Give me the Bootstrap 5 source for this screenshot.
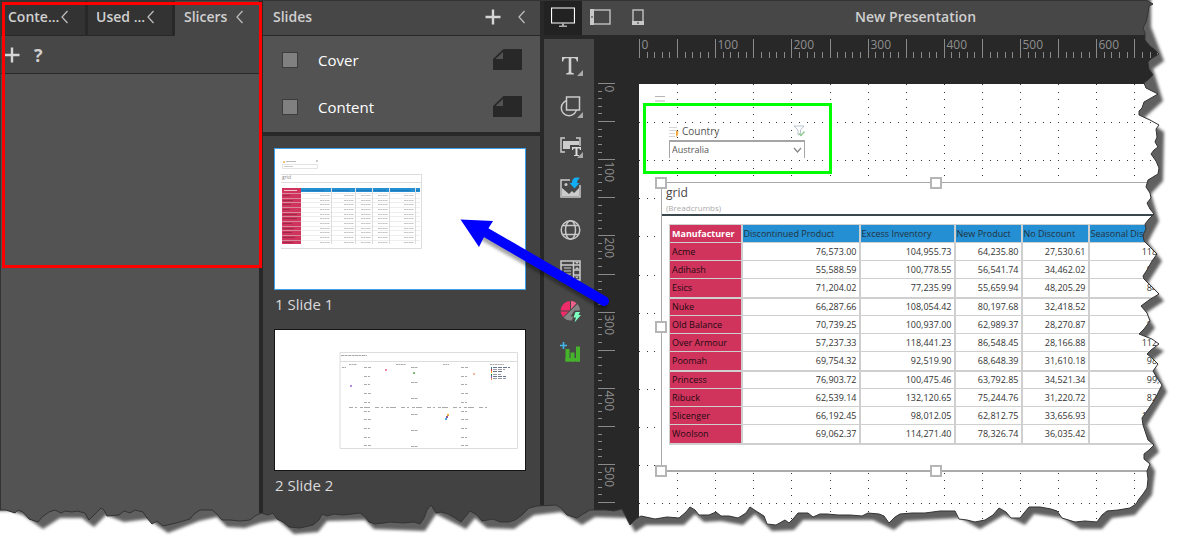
<!DOCTYPE html>
<html lang="en">
<head>
<meta charset="utf-8">
<meta name="viewport" content="width=device-width, initial-scale=1">
<title>New Presentation</title>
<link rel="stylesheet" href="https://cdn.jsdelivr.net/npm/bootstrap@5.3.0/dist/css/bootstrap.min.css">
<style>
  :root { --ink:#282828; --bar:#474747; --panel:#535353; --deep:#424242; --soft:#d0d0d0; }
  body { font-family:"Open Sans","Noto Sans",sans-serif; background:var(--ink); color:#fff; font-size:15px; line-height:20px; }
  button { color:inherit; background:none; border:0; padding:0; }
  svg { display:block; }
  .shell { min-height:100vh; border-left:1px solid #333; border-top:1px solid #333; }
  .slicer-pane { width:262px; background:var(--panel); border-right:4px solid var(--ink); }
  .tabs { height:35px; background:var(--ink); gap:3px; padding-bottom:1px; }
  .tab { width:84px; padding-left:7px; padding-bottom:3px; background:#333; color:var(--soft); font-size:14px; font-weight:600; gap:1px; white-space:nowrap; }
  .tab.on { background:var(--bar); margin-bottom:-1px; padding-left:9px; gap:8px; }
  .pane-tools { height:38px; background:var(--bar); border-bottom:1px solid var(--ink); gap:14px; padding-left:3px; color:var(--soft); }
  .ask { font-size:18px; font-weight:700; }
  .slides-pane { width:277px; background:var(--deep); }
  .bar-head { height:35px; background:var(--bar); border-bottom:1px solid var(--ink); color:var(--soft); font-size:14px; font-weight:600; padding:0 14px 3px 10px; }
  .masters { background:var(--panel); border-bottom:4px solid var(--ink); height:100px; }
  .master-row { height:47px; padding:0 18px 0 19px; gap:20px; }
  .form-check-input.sq { width:16px; height:16px; margin:0; border:1px solid #3c3c3c; border-radius:0; background-color:#808080; }
  .slide-list { padding:12px 11px 0; }
  .thumb { border:1px solid #151515; background:#fff; width:252px; display:block; }
  .thumb.on { border-color:#3ea0ea; }
  .thumb-label { height:39px; padding:4px 1px; color:#dadada; }
  .stage { border-left:4px solid var(--ink); min-width:0; }
  .stage-top { height:34px; background:var(--bar); }
  .device { width:37px; padding-bottom:2px; }
  .device.on { width:38px; background:#222; }
  .doc-title { font-size:14px; font-weight:600; color:var(--soft); padding-bottom:3px; }
  .work { min-width:0; }
  .tool-strip { width:50px; background:var(--bar); padding-top:5px; }
  .tool { height:41px; width:50px; padding-left:12px; }
  .ruler-side { width:45px; padding-top:48px; }
  .ruler-top { height:49px; padding-top:4px; }
  .ruler-top svg { overflow:visible; }
  .tick-text { font-size:12px; fill:#8f8f8f; }
  .board { background:#fff; color:#444; overflow:hidden; }
  .slicer { left:30px; top:38px; width:136px; font-size:10px; line-height:18px; color:#555; }
  .slicer-box { width:136px; height:18px; border:2px solid #a5a5a5; border-width:2px 1px 0; background:#fff; font-size:9px; line-height:14px; color:#555; padding:0 2px; appearance:none; border-radius:0; }
  .chev { right:3px; top:25px; }
  .frame { left:22px; top:98px; width:550px; height:290px; border:1px solid #aaa; border-width:1px 2px 2px 1px; background:#fff; }
  .frame-head { height:33px; border-bottom:2px solid #3a474d; padding:2px 4px; }
  .frame-title { font-size:12px; line-height:16px; }
  .crumbs { font-size:8px; line-height:14px; color:#aaa; }
  .grip { width:12px; height:12px; background:#fff; border:2px solid #b5b5b5; }
  .data { margin:8px 0 0 7px; width:620px; table-layout:fixed; border-collapse:collapse; font-size:9px; line-height:12px; color:#333; }
  .data th, .data td { height:18px; padding:2px 2px; border:1px solid #cfcfcf; border-right-width:2px; text-align:right; white-space:nowrap; overflow:hidden; }
  .data th { text-align:left; font-weight:400; background:#248fd3; color:#20333f; padding-left:1px; }
  .data th:first-child { background:#d0345c; color:#240a12; padding-left:2px; }
  .data thead th:first-child { color:#fff; font-weight:700; }
  .data tbody tr:nth-child(4n+3) > * { border-bottom-width:2px; height:19px; }
  .red-box { left:2px; top:2px; width:260px; height:266px; border:3px solid #f00; pointer-events:none; }
  .green-box { left:4px; top:19px; width:189px; height:71px; border:3px solid #0f0; }
  .over { left:0; top:0; pointer-events:none; }
</style>
</head>
<body>
<div class="position-relative overflow-hidden">
<div class="shell d-flex">
  <section class="slicer-pane flex-shrink-0">
    <div class="tabs d-flex align-items-stretch">
      <button class="tab d-flex align-items-center">Conte...<svg width="9" height="14"><path d="M7.500 1L2 7l5.500 6" fill="none" stroke="#bbb" stroke-width="1.300"/></svg></button>
      <button class="tab d-flex align-items-center ps-2">Used ...<svg width="9" height="14"><path d="M7.500 1L2 7l5.500 6" fill="none" stroke="#bbb" stroke-width="1.300"/></svg></button>
      <button class="tab on d-flex align-items-center">Slicers<svg width="9" height="14"><path d="M7.500 1L2 7l5.500 6" fill="none" stroke="#bbb" stroke-width="1.300"/></svg></button>
    </div>
    <div class="pane-tools d-flex align-items-center">
      <button aria-label="Add slicer"><svg width="16" height="16"><path d="M8 .5v15M.5 8h15" stroke="#d6d6d6" stroke-width="2.400"/></svg></button>
      <button class="ask" aria-label="Help">?</button>
    </div>
  </section>

  <section class="slides-pane flex-shrink-0">
    <div class="bar-head d-flex align-items-center">Slides
      <button class="ms-auto" aria-label="Add slide"><svg width="16" height="16"><path d="M8 .5v15M.5 8h15" stroke="#d6d6d6" stroke-width="2.400"/></svg></button>
      <button class="ms-3" aria-label="Collapse"><svg width="9" height="14"><path d="M7.500 1L2 7l5.500 6" fill="none" stroke="#bbb" stroke-width="1.300"/></svg></button>
    </div>
    <div class="masters">
      <div class="master-row d-flex align-items-center">
        <input class="form-check-input sq" type="checkbox" id="cover"><label for="cover" class="flex-fill">Cover</label>
        <svg width="29" height="21"><path d="M10.500 0H29v21H0V10z" fill="#282828"/><path d="M10 3v7H2.500z" fill="#535353"/></svg>
      </div>
      <div class="master-row d-flex align-items-center">
        <input class="form-check-input sq" type="checkbox" id="content"><label for="content" class="flex-fill">Content</label>
        <svg width="29" height="21"><path d="M10.500 0H29v21H0V10z" fill="#282828"/><path d="M10 3v7H2.500z" fill="#535353"/></svg>
      </div>
    </div>
    <div class="slide-list">
      <button class="thumb on" aria-label="Open slide 1"><svg id="mini1" width="250" height="140" viewBox="0 0 250 140"></svg></button>
      <div class="thumb-label">1 Slide 1</div>
      <button class="thumb" aria-label="Open slide 2"><svg id="mini2" width="250" height="140" viewBox="0 0 250 140"></svg></button>
      <div class="thumb-label">2 Slide 2</div>
    </div>
  </section>

  <main class="stage flex-fill d-flex flex-column">
    <div class="stage-top d-flex align-items-stretch">
      <button class="device on d-flex align-items-center justify-content-center" aria-label="Desktop"><svg width="24" height="20"><path d="M.5 1h23v15H.5z" fill="none" stroke="#fff" stroke-width="1.200"/><path d="M11 16h2v2.500h3V20H8v-1.500h3z" fill="#aaa"/></svg></button>
      <button class="device d-flex align-items-center justify-content-center" aria-label="Tablet"><svg width="21" height="16"><path d="M1 1h19v14H1z" fill="none" stroke="#bbb" stroke-width="1.500"/><path d="M0 0h4v16H0z" fill="#c8c8c8"/><path d="M1.500 7h1v2h-1z" fill="#333"/></svg></button>
      <button class="device d-flex align-items-center justify-content-center" aria-label="Phone"><svg width="12" height="16"><path d="M1 1h10v14H1z" fill="none" stroke="#bbb" stroke-width="1.500"/><path d="M0 12h12v4H0z" fill="#c8c8c8"/><path d="M5 13.500h2v1H5z" fill="#333"/></svg></button>
      <div class="doc-title flex-fill d-flex align-items-center justify-content-center pe-2">New Presentation</div>
    </div>
    <div class="work d-flex flex-fill">
      <div class="tool-strip mt-1 flex-shrink-0 d-flex flex-column align-items-center">
        <button class="tool" aria-label="Text"><svg width="34" height="34" viewBox="0 0 34 34"><path d="M6 9h16v4.500h-1.200c-.3-2.500-1-3.200-3-3.200h-2.500V23.500c0 1.200.5 1.600 2.500 1.800v1.200h-7.600v-1.200c2-.2 2.500-.6 2.500-1.800V10.300h-2.500c-2 0-2.700.7-3 3.200H6z" fill="#d0d0d0"/><path d="M27 22v6h-6z" fill="#aaa"/></svg></button>
        <button class="tool" aria-label="Shape"><svg width="34" height="34" viewBox="0 0 34 34"><circle cx="13" cy="19" r="7.700" fill="none" stroke="#ccc" stroke-width="1.500"/><path d="M10.500 8h13v13h-13z" fill="#474747" stroke="#ccc" stroke-width="1.500"/><path d="M27 23v6h-6z" fill="#aaa"/></svg></button>
        <button class="tool" aria-label="Dynamic text"><svg width="34" height="34" viewBox="0 0 34 34"><path d="M9 8H5v14h4M20 8h4v8" fill="none" stroke="#ccc" stroke-width="1.500"/><path d="M7 11h16v4h-9v4H7z" fill="#ccc"/><path d="M16 17h9v3h-1l-.5-1.500h-2V25h1.500v1h-5v-1h1.500v-6.500h-2L17 20h-1z" fill="#ddd"/><path d="M27 22v6h-6z" fill="#aaa"/></svg></button>
        <button class="tool" aria-label="Image"><svg width="34" height="34" viewBox="0 0 34 34"><path d="M14 9H5v17h19V14" fill="none" stroke="#ccc" stroke-width="1.500"/><path d="M6 25v-8l7 6 3-3 2 2 5-5v8z" fill="#ccc"/><circle cx="10" cy="13.500" r="1.500" fill="#ccc"/><path d="M24 7c-5-1.500-8 .5-8 5h-2.500l5 5.500 5-5.500H21c0-2 1-4 3-5z" fill="#12aef5"/></svg></button>
        <button class="tool" aria-label="Web page"><svg width="34" height="34" viewBox="0 0 34 34"><g fill="none" stroke="#c8c8c8" stroke-width="1.500"><circle cx="14.500" cy="18" r="9.300"/><ellipse cx="14.500" cy="18" rx="5" ry="9.300"/><path d="M6.500 13.500h16M6.500 22.500h16"/></g></svg></button>
        <button class="tool" aria-label="Panel"><svg width="34" height="34" viewBox="0 0 34 34"><path d="M5 8h19v19H5zM5 12h19M17.500 8v19M18 17h6M18 22h6" fill="none" stroke="#ccc" stroke-width="1.500"/><path d="M8 15h7M8 18h7M8 21h7M8 24h7" stroke="#ccc"/><path d="M19 9h4l-2 2zM19 16l2-2 2 2M19 23.500h4l-2 2z" fill="#ccc"/></svg></button>
        <button class="tool" aria-label="Visual"><svg width="34" height="34" viewBox="0 0 34 34"><path d="M14 16.500V7a10 10 0 0 0-9.500 9.500zM12.500 17.500h-8a10 10 0 0 0 2.500 5.500z" fill="#ee2c6a"/><path d="M15 7a9 9 0 0 1 5.500 2.200l-5.500 6z" fill="#f05f8c"/><path d="M21.500 10a10 10 0 0 1 2.500 6.500h-5.500l-4 6h2.500l-1 4a10 10 0 0 1-8.500-3z" fill="#858585"/><path d="M19.500 18h4.500l-1.500 3h2.500l-6.500 7.500 1.500-5h-2.500z" fill="#7dffc0"/></svg></button>
        <button class="tool" aria-label="Add chart"><svg width="34" height="34" viewBox="0 0 34 34"><path d="M9.500 14h4v12.500h-4zM14.500 17.500h4v9h-4zM20 11.500h4v15h-4z" fill="#46b32d"/><path d="M9.500 23H24v3.500H9.500z" fill="#46b32d"/><path d="M7.500 7v7M4 10.500h7" stroke="#3fb6ee" stroke-width="1.600"/></svg></button>
      </div>
      <div class="ruler-side flex-shrink-0"><svg id="vruler" width="45" height="460"></svg></div>
      <div class="flex-fill d-flex flex-column overflow-hidden">
        <div class="ruler-top"><svg id="hruler" width="100%" height="45"></svg></div>
        <div class="board position-relative flex-fill">
          <svg id="dots" class="position-absolute over" width="100%" height="100%"></svg>
          <svg class="position-absolute" style="left:16px;top:12px" width="10" height="6"><path d="M0 .5h10M0 5h10" stroke="#b5b5b5"/></svg>
          <div class="slicer position-absolute">
            <div class="d-flex align-items-center">
              <svg width="13" height="13" class="flex-shrink-0"><path d="M0 2.500h8M0 5.500h8M0 8.500h6M0 11.500h6" stroke="#d4d4d4"/><path d="M7 6l3 .5-2 2 1.500 0-2 4-.5-4z" fill="#f0a020"/></svg>
              <label for="country" class="flex-fill">Country</label>
              <svg width="12" height="12"><path d="M1 1h10L7.500 5v4L5 10V5z" fill="none" stroke="#b8c4cc"/><path d="M6 8.500l2 2 3.500-4" fill="none" stroke="#8c8" stroke-width="1.200"/></svg>
            </div>
            <select id="country" class="slicer-box d-block"><option>Australia</option></select>
            <svg class="chev position-absolute" width="9" height="7"><path d="M1 1l3.500 4L8 1" fill="none" stroke="#888" stroke-width="1.300"/></svg>
          </div>
          <div class="frame position-absolute">
            <div class="frame-head"><div class="frame-title">grid</div><div class="crumbs">(Breadcrumbs)</div></div>
            <table class="data">
              <colgroup><col style="width:72px"><col style="width:118px"><col style="width:95px"><col style="width:67px"><col style="width:67px"><col style="width:102px"><col></colgroup>
              <thead><tr><th>Manufacturer</th><th>Discontinued Product</th><th>Excess Inventory</th><th>New Product</th><th>No Discount</th><th>Seasonal Discount</th><th></th></tr></thead>
              <tbody id="rows"></tbody>
            </table>
            <span class="grip position-absolute" style="left:-7px;top:-6px"></span>
            <span class="grip position-absolute" style="left:268px;top:-6px"></span>
            <span class="grip position-absolute" style="left:-7px;top:138px"></span>
            <span class="grip position-absolute" style="left:-7px;top:282px"></span>
            <span class="grip position-absolute" style="left:268px;top:282px"></span>
          </div>
          <div class="green-box position-absolute"></div>
        </div>
      </div>
    </div>
  </main>
</div>

<!-- call-outs and the torn paper edge lie over the whole window -->
<svg class="over position-absolute w-100 h-100" viewBox="0 0 1183 550" preserveAspectRatio="none">
  <defs>
    <filter id="soft" x="-10%" y="-10%" width="120%" height="120%"><feGaussianBlur stdDeviation="1.500"/></filter>
    <path id="torn" d="M-20-20H1146V0L1153 4 1149 6 1148 13 1146 22 1143 28 1145 33 1145 40 1150 46 1154 49 1159 54 1151 59 1148 62 1149 69 1153 75 1149 79 1144 83 1146 88 1158 94 1151 98 1144 102 1142 108 1139 111 1139 115 1150 120 1159 125 1156 129 1157 137 1155 142 1158 147 1154 150 1151 154 1156 161 1159 168 1158 174 1148 180 1146 187 1150 193 1151 198 1147 203 1150 209 1154 214 1149 219 1145 224 1146 229 1143 235 1144 241 1150 247 1157 254 1152 261 1147 270 1143 276 1144 279 1152 287 1159 294 1149 300 1141 306 1147 313 1150 321 1144 329 1139 334 1152 339 1159 344 1151 350 1147 354 1152 358 1158 364 1153 371 1157 378 1162 385 1158 393 1155 399 1149 408 1142 418 1143 425 1146 434 1148 440 1154 445 1149 450 1144 454 1144 459 1150 464 1147 471 1148 479 1147 488 1143 494 1139 499 1136 504 1130 508 1118 510 1107 511 1102 515 1097 522 1085 521 1075 522 1062 518 1057 511 1051 509 1040 507 1029 507 1024 513 1020 518 1011 518 1006 512 999 508 993 515 985 520 975 522 967 520 959 519 955 511 940 511 925 513 912 513 900 514 895 517 889 523 884 516 879 514 868 513 862 516 850 515 838 515 827 514 820 514 813 517 808 513 798 513 793 519 789 523 785 520 776 525 767 524 764 516 756 511 750 507 746 513 738 518 729 516 721 516 716 512 709 515 699 515 695 510 690 507 686 512 679 518 667 517 655 519 641 516 636 519 630 525 626 517 622 509 614 511 606 510 590 510 583 514 577 518 567 515 561 508 556 505 537 506 529 508 522 515 515 520 509 522 500 522 493 519 482 521 477 515 470 511 466 516 461 522 455 518 448 514 441 512 436 513 431 505 427 510 424 518 420 524 414 522 403 523 390 522 384 523 375 524 369 522 365 517 360 513 352 514 343 515 334 514 327 516 322 514 319 520 313 525 300 528 289 527 283 522 277 519 273 513 268 515 261 513 255 516 250 520 240 521 230 520 222 520 216 513 212 510 200 510 194 514 190 519 176 523 163 526 157 521 152 524 147 518 143 512 135 510 130 513 124 511 119 515 107 516 104 510 101 508 95 514 89 520 85 513 77 511 72 512 65 511 61 513 55 510 49 512 42 517 38 522 29 519 23 512 18 510 15 513 6 510H-20Z"/>
    <path id="torn-shade" d="M-20-20H1146V20L1159 54 1148 62 1158 94 1139 111 1159 125 1158 174 1146 187 1154 214 1143 235 1157 254 1143 276 1159 294 1141 306 1150 321 1139 334 1159 344 1147 354 1162 385 1142 418 1154 445 1144 454 1150 464 1147 488 1130 508 1107 511 1097 522 1075 522 1057 511 1029 507 1020 518 999 508 975 522 955 511 900 514 889 523 868 513 798 513 789 523 767 524 750 507 738 518 716 514 699 515 690 507 679 518 641 518 630 525 622 511 590 510 577 518 556 505 529 508 509 522 482 521 470 511 461 522 431 507 420 524 369 522 360 513 322 514 313 525 289 527 273 513 255 516 240 521 222 520 212 510 194 514 163 526 143 512 119 515 101 508 89 520 77 511 55 511 38 522 18 508 6 504H-20Z"/>
    <mask id="beyond"><rect width="1183" height="550" fill="#fff"/><use href="#torn" fill="#000"/></mask>
  </defs>
  <g stroke-linecap="round" stroke-linejoin="round">
    <path d="M486 233L604 301" stroke="#000" stroke-opacity=".35" stroke-width="9" filter="url(#soft)" transform="translate(-1 4)"/>
    <path d="M485 232L604 301" stroke="#00f" stroke-width="10"/>
    <path d="M460.500 219.500L493 221 488 229 479 247z" fill="#00f"/>
  </g>
  <g mask="url(#beyond)"><rect width="1183" height="550" fill="#fff"/><use href="#torn-shade" fill="#606060" filter="url(#soft)" transform="translate(5 7)"/></g>
  <use href="#torn" fill="none" stroke="#333"/>
</svg>
<div class="red-box position-absolute"></div>
</div>

<script src="https://cdn.jsdelivr.net/npm/bootstrap@5.3.0/dist/js/bootstrap.bundle.min.js"></script>
<script>
const data = [
 ["Acme","76,573.00","104,955.73","64,235.80","27,530.61","118,166.01"],
 ["Adihash","55,588.59","100,778.55","56,541.74","34,462.02","94,451.18"],
 ["Esics","71,204.02","77,235.99","55,659.94","48,205.29","84,981.10"],
 ["Nuke","66,287.66","108,054.42","80,197.68","32,418.52","91,551.81"],
 ["Old Balance","70,739.25","100,937.00","62,989.37","28,270.87","83,105.68"],
 ["Over Armour","57,237.33","118,441.23","86,548.45","28,166.88","112,471.16"],
 ["Poomah","69,754.32","92,519.90","68,648.39","31,610.18","98,421.21"],
 ["Princess","76,903.72","100,475.46","63,792.85","34,521.34","99,718.86"],
 ["Ribuck","62,539.14","132,120.65","75,244.76","31,220.72","82,084.56"],
 ["Slicenger","66,192.45","98,012.05","62,812.75","33,656.93","110,751.34"],
 ["Woolson","69,062.37","114,271.40","78,326.74","36,035.42","87,188.37"]];
document.getElementById("rows").innerHTML = data.map(r =>
  `<tr><th>${r[0]}</th>${r.slice(1).map(v => `<td>${v}</td>`).join("")}<td></td></tr>`).join("");

// rulers: 100 slide units take 76.2 pixels
const at = n => Math.round(n * .762) + .5;
const hr = document.getElementById("hruler"), vr = document.getElementById("vruler");
const wide = hr.parentElement.clientWidth, high = 460;
let h = "", v = "", d = "";
for (let n = 0; at(n) < wide; n += 10) {
  h += `<path d="M${at(n)} ${n % 50 ? 13 : 0}V19" stroke="#8a8a8a"/>`;
  if (n % 100 === 0 && at(n) + 26 < wide) h += `<text class="tick-text" x="${at(n) + 2}" y="10">${n}</text>`;
}
for (let n = 0; at(n) < high; n += 10) {
  v += `<path d="M4 ${at(n)}H${n % 50 ? 8 : 21}" stroke="#8a8a8a"/>`;
  if (n % 100 === 0 && at(n) + 26 < high) v += `<text class="tick-text" transform="translate(11 ${at(n) + 2}) rotate(90)">${n}</text>`;
}
for (let n = 50; at(n) < wide; n += 50)
  for (let m = 0; at(m) < high; m += 10) d += `M${at(n) - .5} ${at(m)}h1`;
for (let n = 50; at(n) < high; n += 50)
  for (let m = 0; at(m) < wide; m += 10) d += `M${at(m) - .5} ${at(n)}h1`;
hr.innerHTML = h;
vr.innerHTML = v;
document.getElementById("dots").innerHTML = `<path d="${d}" stroke="#333"/>`;

// first slide, reduced
let a = `<g fill="#bbb"><rect x="8" y="12" width="2" height="2" fill="#f6c27a"/><path d="M11 12h10v1H11z"/><rect x="41" y="11" width="2" height="2" fill="#ccc"/></g>
<path d="M7.500 15.500h35v4h-35z" fill="none" stroke="#e4e4e4"/><path d="M9 17.500h9" stroke="#ccc"/>
<path d="M6 25.500h141M6 33.500h141M6 99.500h140.500V25" fill="none" stroke="#ddd"/>
<text x="7" y="30" font-size="5" fill="#888">grid</text>
<rect x="7" y="39" width="19" height="56" fill="#d0345c"/><rect x="26" y="39" width="119" height="4" fill="#248fd3"/>
<path d="M9 41.500h13" stroke="#fff" stroke-opacity=".7"/><path d="M27 41.500h22M57 41.500h17M82 41.500h14M99 41.500h12M116 41.500h19M141 41.500h3" stroke="#1f73b0" stroke-dasharray="2 .5"/>`;
const right = [56, 80, 97, 114, 140];
data.forEach((r, i) => {
  const y = Math.round(46 + i * 4.65) + .5;
  a += `<path d="M7 ${y - 2}H145" stroke="#ddd" stroke-width=".5"/><path d="M8 ${y}h${r[0].length + 3}" stroke="#9d2848"/>`;
  right.forEach(x => a += `<path d="M${x - 11} ${y}h10" stroke="#c4c4c4" stroke-dasharray="2 .4"/>`);
});
a += [57, 81, 98, 115, 141].map(x => `<path d="M${x - .5} 39V95" stroke="#ddd"/>`).join("");
document.getElementById("mini1").innerHTML = a;

// second slide, reduced
let b = `<path d="M65 22.500H242.500V118.500H65zM65 31.500H242" fill="none" stroke="#ddd"/><path d="M66 25.500h26" stroke="#aaa" stroke-dasharray="3 .5"/>
<g stroke="#aaa" stroke-dasharray="2 .5"><path d="M74 34.500h8M121 34.500h10M168 34.500h6M215 34.500h14M67 37.500h4"/></g>
<path d="M74 77.500h140" stroke="#aaa" stroke-dasharray="4 2 2 3 3 1 6 5"/>`;
for (let i = 0; i < 10; i++) b += [93, 190].map(x => `<path d="M${x - 4} ${37.500 + Math.round(i * 8.700)}h${i % 3 ? 6 : 7}" stroke="#aaa" stroke-dasharray="3 1"/>`).join("");
[37, 52, 68, 84, 100, 116].forEach(y => b += `<path d="M136 ${y + .5}h7" stroke="#aaa" stroke-dasharray="3 .5"/>`);
[[110,39,"#eb86aa"],[138,42,"#83b878"],[75,55,"#b48adb"],[198,43,"#f3b69a"],[172,84,"#f6a839"],[171,86,"#8a579b"],[170,88,"#4da6df"]].forEach(p => b += `<rect x="${p[0]}" y="${p[1]}" width="2" height="2" fill="${p[2]}"/>`);
["#287da0","#c52e50","#f1a32a","#347331","#805abc","#ed8560"].forEach((c, i) => {
  const y = 37 + Math.round(i * 2.200);
  b += `<rect x="216" y="${y}" width="1" height="2" fill="${c}"/><path d="M218 ${y + .5}h${[17, 12, 10, 8, 13, 13][i]}" stroke="${i % 2 ? "#99a" : "#678"}" stroke-dasharray="4 1"/>`;
});
document.getElementById("mini2").innerHTML = b;
</script>
</body>
</html>
